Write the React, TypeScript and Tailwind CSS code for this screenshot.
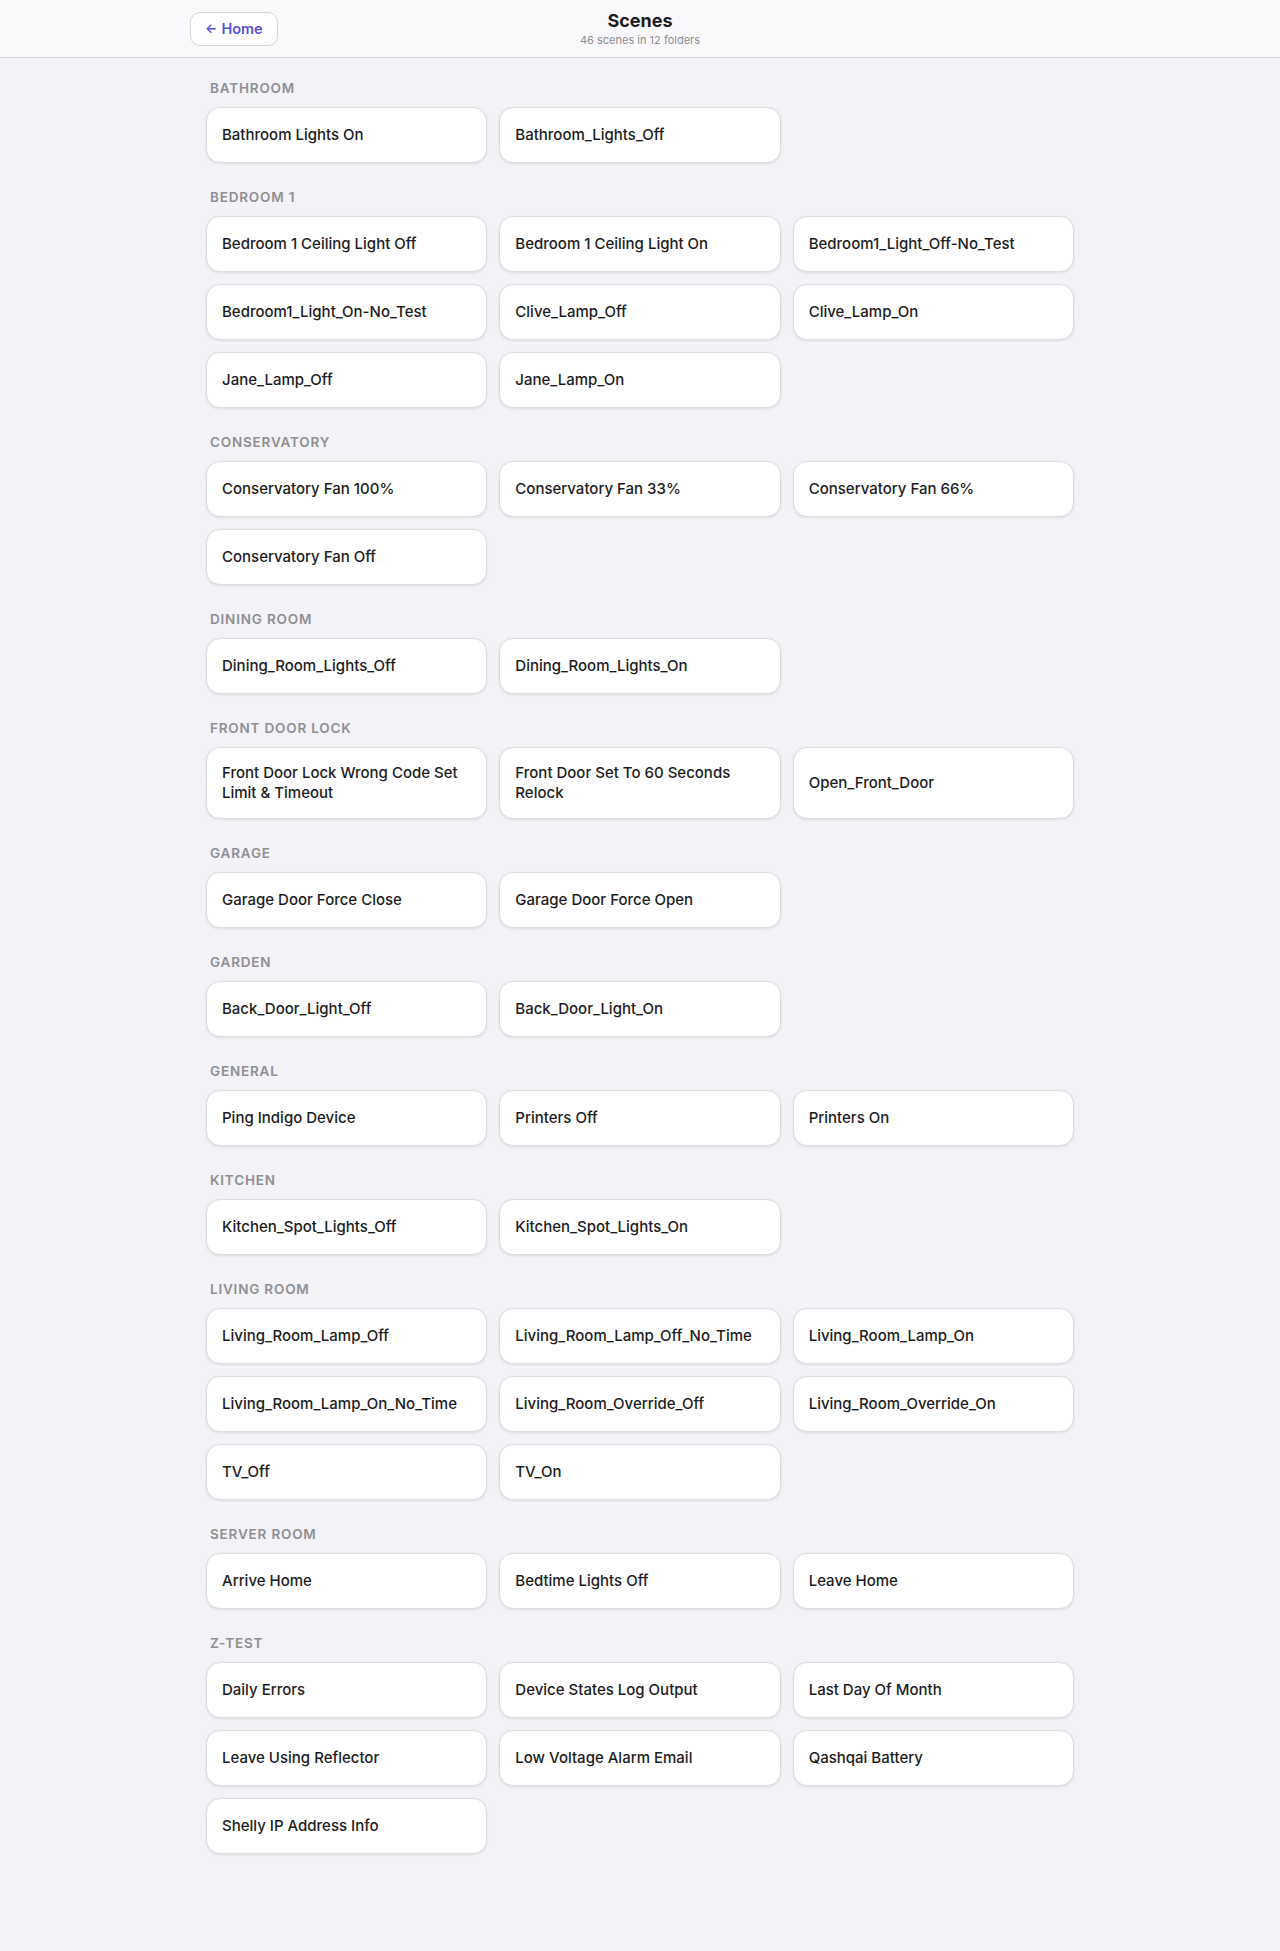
import React from 'react';

interface Folder {
  name: string;
  scenes: string[];
}

const folders: Folder[] = [
  { name: 'Bathroom', scenes: ['Bathroom Lights On', 'Bathroom_Lights_Off'] },
  {
    name: 'Bedroom 1',
    scenes: [
      'Bedroom 1 Ceiling Light Off',
      'Bedroom 1 Ceiling Light On',
      'Bedroom1_Light_Off-No_Test',
      'Bedroom1_Light_On-No_Test',
      'Clive_Lamp_Off',
      'Clive_Lamp_On',
      'Jane_Lamp_Off',
      'Jane_Lamp_On',
    ],
  },
  {
    name: 'Conservatory',
    scenes: ['Conservatory Fan 100%', 'Conservatory Fan 33%', 'Conservatory Fan 66%', 'Conservatory Fan Off'],
  },
  { name: 'Dining Room', scenes: ['Dining_Room_Lights_Off', 'Dining_Room_Lights_On'] },
  {
    name: 'Front Door Lock',
    scenes: ['Front Door Lock Wrong Code Set Limit & Timeout', 'Front Door Set To 60 Seconds Relock', 'Open_Front_Door'],
  },
  { name: 'Garage', scenes: ['Garage Door Force Close', 'Garage Door Force Open'] },
  { name: 'Garden', scenes: ['Back_Door_Light_Off', 'Back_Door_Light_On'] },
  { name: 'General', scenes: ['Ping Indigo Device', 'Printers Off', 'Printers On'] },
  { name: 'Kitchen', scenes: ['Kitchen_Spot_Lights_Off', 'Kitchen_Spot_Lights_On'] },
  {
    name: 'Living Room',
    scenes: [
      'Living_Room_Lamp_Off',
      'Living_Room_Lamp_Off_No_Time',
      'Living_Room_Lamp_On',
      'Living_Room_Lamp_On_No_Time',
      'Living_Room_Override_Off',
      'Living_Room_Override_On',
      'TV_Off',
      'TV_On',
    ],
  },
  { name: 'Server Room', scenes: ['Arrive Home', 'Bedtime Lights Off', 'Leave Home'] },
  {
    name: 'Z-Test',
    scenes: [
      'Daily Errors',
      'Device States Log Output',
      'Last Day Of Month',
      'Leave Using Reflector',
      'Low Voltage Alarm Email',
      'Qashqai Battery',
      'Shelly IP Address Info',
    ],
  },
];

const SceneButton = ({ label }: { label: string }) => (
  <button className="min-h-[56px] flex items-center text-left px-[15px] py-[15px] bg-white rounded-[14px] border border-[#dcdce1] shadow-[0_1px_3px_rgba(0,0,0,0.09)] text-[15px] leading-5 font-medium text-[#1c1c1e]">
    {label}
  </button>
);

export default function App() {
  const total = folders.reduce((n, f) => n + f.scenes.length, 0);

  return (
    <div className="min-h-[1951px] bg-[#f2f2f7] font-['Inter',sans-serif] antialiased">
      {/* Top bar */}
      <header className="h-[58px] bg-[#f9f9fb] border-b border-[#d6d6db]">
        <div className="max-w-[900px] mx-auto h-full flex items-center relative">
          <button className="h-[34px] px-[14px] flex items-center gap-1 bg-white border border-[#d4d4da] rounded-[10px] text-[14.5px] font-semibold text-[#5550d8]">
            <span className="text-[13px]">←</span>
            <span>Home</span>
          </button>
          <div className="absolute left-1/2 -translate-x-1/2 top-[10px] flex flex-col items-center">
            <h1 className="text-[18px] leading-[22px] font-bold text-[#1c1c1e]">Scenes</h1>
            <p className="mt-[1px] text-[11px] leading-[14px] text-[#8e8e93]">
              {total} scenes in {folders.length} folders
            </p>
          </div>
        </div>
      </header>

      {/* Folder list */}
      <main className="max-w-[900px] mx-auto px-4 pt-[20px] pb-10 space-y-6">
        {folders.map((folder) => (
          <section key={folder.name}>
            <h2 className="pl-[4px] mb-[9px] text-[13.5px] leading-5 font-semibold uppercase tracking-[0.06em] text-[#8e8e93]">
              {folder.name}
            </h2>
            <div className="grid grid-cols-3 gap-3">
              {folder.scenes.map((s) => (
                <SceneButton key={s} label={s} />
              ))}
            </div>
          </section>
        ))}
      </main>
    </div>
  );
}
